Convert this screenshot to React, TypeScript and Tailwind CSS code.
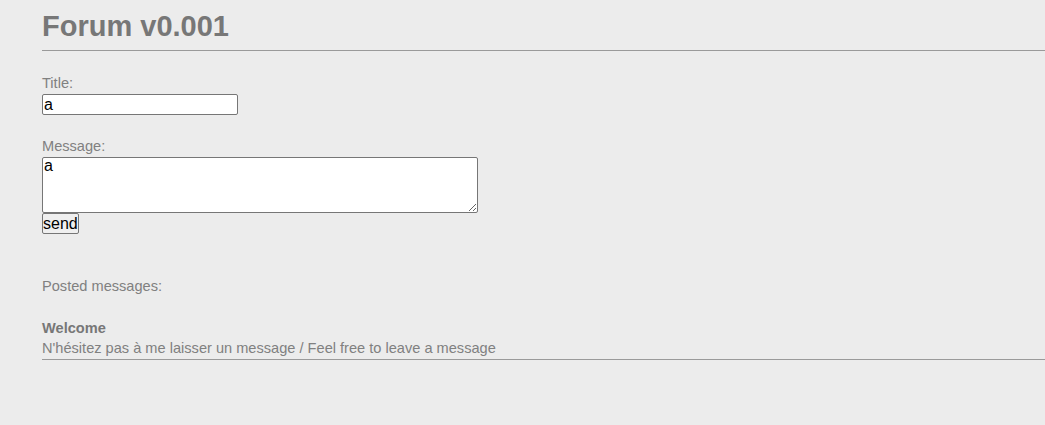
export default function App() {
  return (
    <div className="min-h-screen bg-[#ececec] font-['Liberation_Sans',Arial,sans-serif]">
      <div className="ml-[42px] flex flex-col">
        <h1 className="mt-[10px] border-b border-[#9a9a9a] pb-[7px] text-[29px] font-bold leading-[33px] text-[#777777]">
          Forum v0.001
        </h1>

        <form className="flex flex-col items-start" onSubmit={(e) => e.preventDefault()}>
          <label className="mt-[24px] text-[14.6px] leading-[17px] text-[#808080]">Title:</label>
          <input
            defaultValue="a"
            className="mt-[2px] h-[21px] w-[196px] rounded-[2px] border border-[#767676] bg-white px-[1px] text-[16px] leading-normal text-black outline-none"
          />
          <label className="mt-[23px] text-[14.6px] leading-[17px] text-[#808080]">Message:</label>
          <textarea
            defaultValue="a"
            className="mt-[2px] block h-[56px] w-[436px] rounded-[2px] border border-[#767676] bg-white px-[1px] py-0 text-[16px] leading-[16px] text-black outline-none"
          />
          <button className="h-[21px] rounded-[2px] border border-[#767676] bg-[#efefef] px-0 text-[16px] leading-[18px] text-black">
            send
          </button>
        </form>

        <p className="mt-[44px] text-[14.6px] leading-[17px] text-[#808080]">Posted messages:</p>

        <div className="mt-[25px] flex flex-col border-b border-[#9a9a9a]">
          <span className="text-[14.6px] font-bold leading-[17px] text-[#777777]">Welcome</span>
          <span className="mt-[3px] pb-[2px] text-[14.6px] leading-[17px] text-[#808080]">
            N'hésitez pas à me laisser un message / Feel free to leave a message
          </span>
        </div>
      </div>
    </div>
  );
}
